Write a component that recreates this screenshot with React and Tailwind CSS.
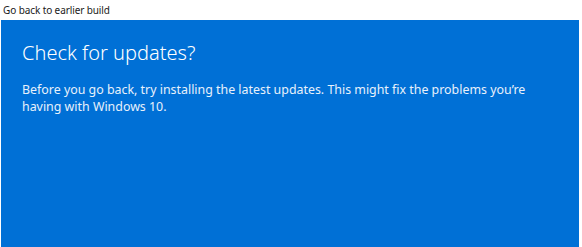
export default function App() {
  return (
    <div
      className="w-[582px] h-[247px] flex flex-col bg-white overflow-hidden"
      style={{ fontFamily: '"Noto Sans", "Open Sans", sans-serif' }}
    >
      <div className="h-[20px] shrink-0 flex items-center pl-[3px] text-[10px] tracking-[-0.1px] text-[#1a1a1a]">
        Go back to earlier build
      </div>
      <div className="flex-1 ml-px mr-[3px] bg-[#0070d6] text-white px-[21px] pt-[18px]">
        <h1 className="text-[20px] leading-[30px] font-light">Check for updates?</h1>
        <p className="mt-[13px] text-[12.4px] leading-[17px] text-[#e8f1fb] w-[520px]">
          Before you go back, try installing the latest updates. This might fix the problems you’re having with Windows 10.
        </p>
      </div>
    </div>
  );
}
